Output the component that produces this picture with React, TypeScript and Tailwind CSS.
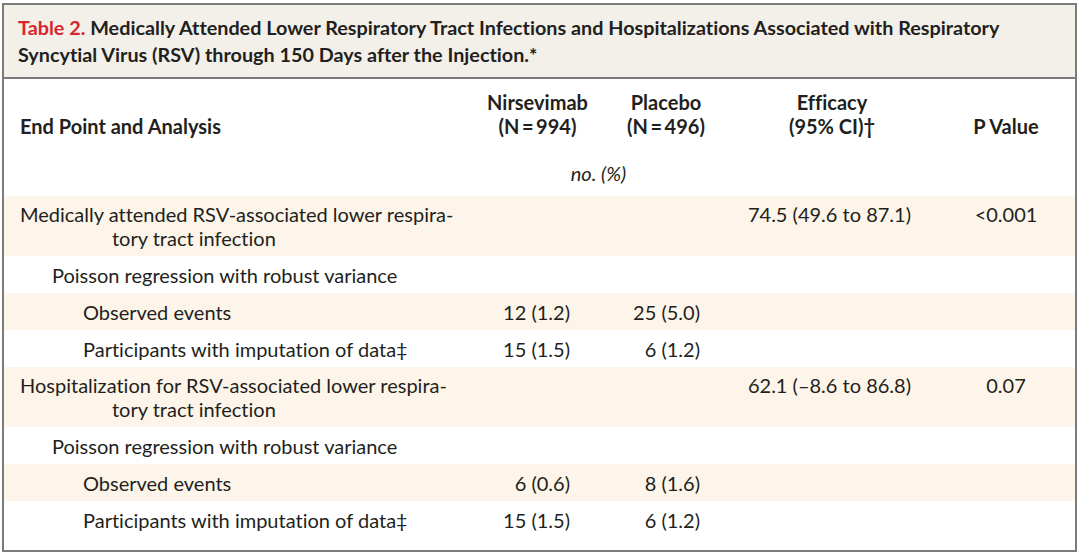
const font = { fontFamily: 'Lato, "Open Sans", sans-serif' }

type Row = {
  label: string
  cont?: string
  level: 0 | 1 | 2
  nir?: string
  pla?: string
  eff?: string
  p?: string
  tint: boolean
}

const rows: Row[] = [
  {
    label: 'Medically attended RSV-associated lower respira-',
    cont: 'tory tract infection',
    level: 0,
    eff: '74.5 (49.6 to 87.1)',
    p: '<0.001',
    tint: true,
  },
  { label: 'Poisson regression with robust variance', level: 1, tint: false },
  { label: 'Observed events', level: 2, nir: '12 (1.2)', pla: '25 (5.0)', tint: true },
  { label: 'Participants with imputation of data\u2021', level: 2, nir: '15 (1.5)', pla: '6 (1.2)', tint: false },
  {
    label: 'Hospitalization for RSV-associated lower respira-',
    cont: 'tory tract infection',
    level: 0,
    eff: '62.1 (\u20138.6 to 86.8)',
    p: '0.07',
    tint: true,
  },
  { label: 'Poisson regression with robust variance', level: 1, tint: false },
  { label: 'Observed events', level: 2, nir: '6 (0.6)', pla: '8 (1.6)', tint: true },
  { label: 'Participants with imputation of data\u2021', level: 2, nir: '15 (1.5)', pla: '6 (1.2)', tint: false },
]

const cols = 'grid grid-cols-[466px_135px_122px_210px_138px]'

function DataRow({ row, last }: { row: Row; last: boolean }) {
  const indent = row.level === 0 ? 'pl-4' : row.level === 1 ? 'pl-12' : 'pl-[79px]'
  return (
    <div
      className={`${cols} ${row.tint ? 'bg-[#fdf5e9]' : 'bg-white'} ${
        row.cont ? 'pt-[6px] pb-[6px]' : last ? 'pt-[6.5px] pb-[18px]' : 'py-[6.5px]'
      } leading-[24px]`}
    >
      <div className={indent}>
        <div>{row.label}</div>
        {row.cont && <div className="pl-[92px]">{row.cont}</div>}
      </div>
      <div className="pr-[35px] text-right">{row.nir}</div>
      <div className="pr-[27px] text-right">{row.pla}</div>
      <div className="pr-[26px] text-right">{row.eff}</div>
      <div className="text-center">{row.p}</div>
    </div>
  )
}

export default function App() {
  return (
    <div
      className="h-[557px] w-[1080px] bg-white pl-[2px] pt-[3px] [font-variant-ligatures:no-common-ligatures]"
      style={font}
    >
      <div className="w-[1075px] border-2 border-[#7b7b7b] text-[#231f20]">
        <div className="border-b-2 border-[#7b7b7b] bg-[#f3f0ea] px-[14px] py-[9px] text-[19.8px] font-bold leading-[27px]">
          <span className="text-[#d6262e]">Table 2.</span> Medically Attended Lower Respiratory Tract Infections
          and Hospitalizations Associated with Respiratory
          <br />
          Syncytial Virus (RSV) through 150 Days after the Injection.*
        </div>
        <div className="text-[20px]">
          <div className={`${cols} pt-[11px] font-bold leading-[24px]`}>
            <div className="self-end pl-4">End Point and Analysis</div>
            <div className="text-center">
              Nirsevimab
              <br />
              (N{'\u2009'}={'\u2009'}994)
            </div>
            <div className="text-center">
              Placebo
              <br />
              (N{'\u2009'}={'\u2009'}496)
            </div>
            <div className="text-center">
              Efficacy
              <br />
              (95% CI){'\u2020'}
            </div>
            <div className="self-end text-center">P Value</div>
          </div>
          <div className={`${cols} pt-[23px] pb-[11px] leading-[24px]`}>
            <div />
            <div className="col-span-2 text-center italic">no. (%)</div>
          </div>
          {rows.map((r, i) => (
            <DataRow key={i} row={r} last={i === rows.length - 1} />
          ))}
        </div>
      </div>
    </div>
  )
}
